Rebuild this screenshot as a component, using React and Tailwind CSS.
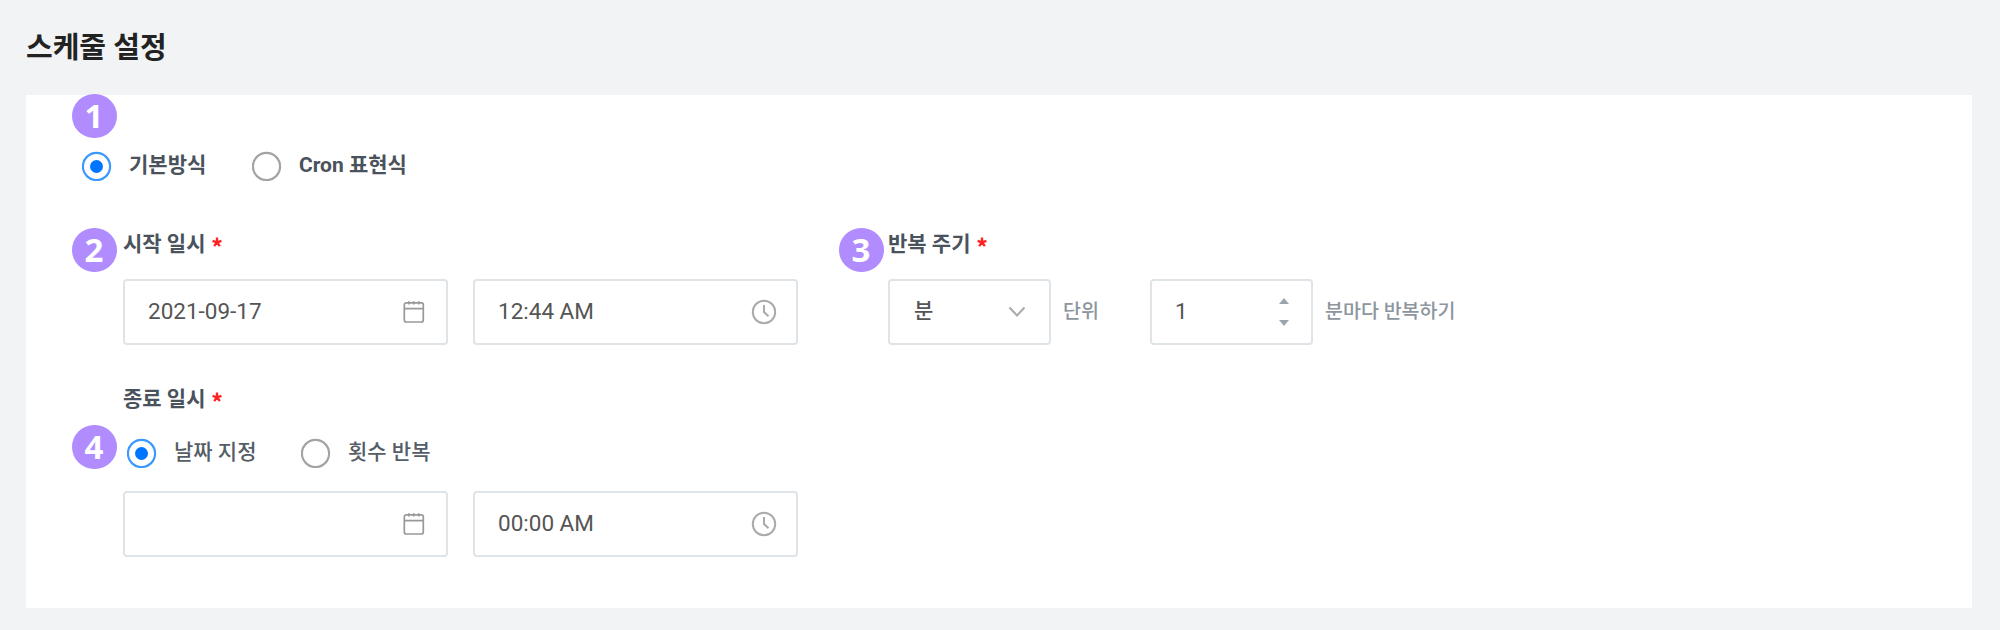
import React from 'react';

function Badge({ n, className }) {
  return (
    <div
      className={`absolute flex h-[44px] w-[45px] items-center justify-center rounded-full bg-[#b18cff] pr-[1px] pb-[2px] font-['Noto_Sans',sans-serif] text-[33px] leading-none font-bold text-white ${className}`}
    >
      <span>{n}</span>
    </div>
  );
}

function Radio({ checked }) {
  return (
    <svg className="size-[30px] shrink-0" viewBox="0 0 30 30" fill="none">
      <circle cx="14.5" cy="15.5" r="13.6" stroke={checked ? '#3b98ff' : '#a3a3a3'} strokeWidth="2.2" />
      {checked && <circle cx="14.5" cy="15.5" r="6.5" fill="#0075ff" />}
    </svg>
  );
}

function Label({ children }) {
  return (
    <div className="flex h-[30px] items-center text-[21px] leading-[30px] font-bold text-[#4a525c]">
      <span className="pt-[2px]">{children}</span>
      <svg className="mb-[3px] ml-[6px] size-[10px]" viewBox="0 0 11 11" fill="none" stroke="#ff2424" strokeWidth="2.6">
        <path d="M5.5 5.8V0.6M5.5 5.8L0.6 4.2M5.5 5.8L10.4 4.2M5.5 5.8L2.4 10M5.5 5.8L8.6 10" />
      </svg>
    </div>
  );
}

function Field({ className, children }) {
  return (
    <div
      className={`flex h-[66px] items-center justify-between rounded-[4px] border-2 border-[#dfe4e9] bg-white pl-[23px] text-[22.5px] leading-[30px] text-[#555] ${className}`}
    >
      {children}
    </div>
  );
}

function CalendarIcon() {
  return (
    <svg className="mr-[21px] h-[24px] w-[22px]" viewBox="0 0 22 24" fill="none" stroke="#999" strokeWidth="1.7">
      <rect x="1.3" y="2.8" width="19" height="19.2" rx="2" />
      <path d="M1.3 8.6H20.3M5.8 1.2V4.6M10.8 1.2V4.6M15.8 1.2V4.6" />
    </svg>
  );
}

function ClockIcon() {
  return (
    <svg className="mr-[19px] size-[26px]" viewBox="0 0 26 26" fill="none" stroke="#aaa" strokeWidth="2">
      <circle cx="13" cy="13" r="11.2" />
      <path d="M13 6V13L17.5 17.3" />
    </svg>
  );
}

function DateTimeRow({ date, time }) {
  return (
    <div className="flex gap-[25px]">
      <Field className="w-[325px]">
        <span className="pb-[2px]">{date}</span>
        <CalendarIcon />
      </Field>
      <Field className="w-[325px]">
        <span className="pb-[2px]">{time}</span>
        <ClockIcon />
      </Field>
    </div>
  );
}

export default function App() {
  return (
    <div className="flex h-[630px] w-[2000px] flex-col bg-[#f1f3f5] pl-[26px] font-[Roboto,'Noto_Sans_CJK_KR',sans-serif]">
      <h1 className="flex h-[95px] items-center pt-[1px] text-[29px] leading-none font-bold text-[#222]">스케줄 설정</h1>

      <main className="relative h-[513px] w-[1946px] bg-white pt-[56px]">
        <div className="flex h-[30px] items-center pl-[56px] text-[21px] font-bold text-[#4a525c]">
          <Radio checked />
          <span className="ml-[17px] w-[123px] whitespace-nowrap">기본방식</span>
          <Radio />
          <span className="ml-[17px]">Cron 표현식</span>
        </div>

        <div className="mt-[47px] flex pl-[97px]">
          <section className="flex w-[765px] flex-col">
            <Label>시작 일시</Label>
            <div className="mt-[21px]">
              <DateTimeRow date="2021-09-17" time="12:44 AM" />
            </div>
            <div className="mt-[38px]">
              <Label>종료 일시</Label>
            </div>
            <div className="mt-[25px] flex h-[30px] items-center pl-[4px] text-[21px] font-medium text-[#555d66]">
              <Radio checked />
              <span className="ml-[17px] w-[127px] whitespace-nowrap">날짜 지정</span>
              <Radio />
              <span className="ml-[17px]">횟수 반복</span>
            </div>
            <div className="mt-[23px]">
              <DateTimeRow date="" time="00:00 AM" />
            </div>
          </section>

          <section className="flex flex-col">
            <Label>반복 주기</Label>
            <div className="mt-[21px] flex items-center text-[19.5px] font-medium text-[#8d959e]">
              <Field className="w-[163px]">
                <span className="pb-[2px] pl-[1px] text-[21px]">분</span>
                <svg className="mr-[23px] h-[12px] w-[18px]" viewBox="0 0 18 12" fill="none" stroke="#aaa" strokeWidth="2">
                  <path d="M1.5 1.5L9 9.5L16.5 1.5" />
                </svg>
              </Field>
              <span className="ml-[12px] w-[87px]">단위</span>
              <Field className="w-[163px] font-normal">
                <span className="pb-[2px]">1</span>
                <svg className="mr-[22px] mb-[1px] h-[28px] w-[10px]" viewBox="0 0 10 28" fill="#9ba5b0">
                  <path d="M0 6L5 0L10 6ZM0 22H10L5 28Z" />
                </svg>
              </Field>
              <span className="ml-[12px]">분마다 반복하기</span>
            </div>
          </section>
        </div>

        <Badge n="1" className="top-[-1px] left-[46px]" />
        <Badge n="2" className="top-[133px] left-[46px]" />
        <Badge n="3" className="top-[133px] left-[813px]" />
        <Badge n="4" className="top-[330px] left-[46px]" />
      </main>
    </div>
  );
}
